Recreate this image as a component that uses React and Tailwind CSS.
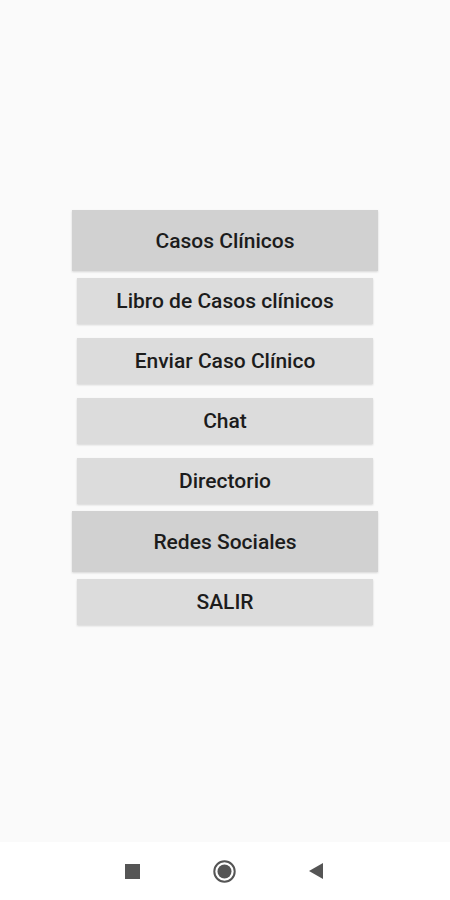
import React from "react";

const items = [
  { label: "Casos Clínicos", big: true },
  { label: "Libro de Casos clínicos" },
  { label: "Enviar Caso Clínico" },
  { label: "Chat" },
  { label: "Directorio" },
  { label: "Redes Sociales", big: true },
  { label: "SALIR" },
];

export default function App() {
  return (
    <div
      className="w-[450px] h-[900px] flex flex-col bg-[#fafafa]"
      style={{ fontFamily: "Roboto, 'Noto Sans', sans-serif" }}
    >
      <div className="flex-1 flex flex-col items-center pt-[210px]">
        <div className="w-[306px] flex flex-col">
          {items.map((it) =>
            it.big ? (
              <div
                key={it.label}
                className="h-[61px] bg-[#d1d1d1] flex items-center justify-center text-[21px] font-medium text-[#1c1c1c] shadow-[0_1px_2px_rgba(0,0,0,0.15)] pt-[3px]"
              >
                {it.label}
              </div>
            ) : (
              <div key={it.label} className="h-[60px] px-[5px] py-[7px] flex">
                <div className="flex-1 bg-[#dcdcdc] flex items-center justify-center text-[21px] font-medium text-[#1c1c1c] shadow-[0_1px_2px_rgba(0,0,0,0.15)] pt-[2px]">
                  {it.label}
                </div>
              </div>
            )
          )}
        </div>
      </div>
      <div className="h-[58px] bg-white flex items-center justify-between pl-[125px] pr-[127px]">
        <div className="w-[15px] h-[15px] bg-[#555555]" />
        <svg width="23" height="23" viewBox="0 0 23 23">
          <circle cx="11.5" cy="11.5" r="10.2" fill="none" stroke="#555555" strokeWidth="2" />
          <circle cx="11.5" cy="11.5" r="7" fill="#555555" />
        </svg>
        <svg width="14" height="16" viewBox="0 0 14 16">
          <polygon points="14,0 14,16 0,8" fill="#555555" />
        </svg>
      </div>
    </div>
  );
}
